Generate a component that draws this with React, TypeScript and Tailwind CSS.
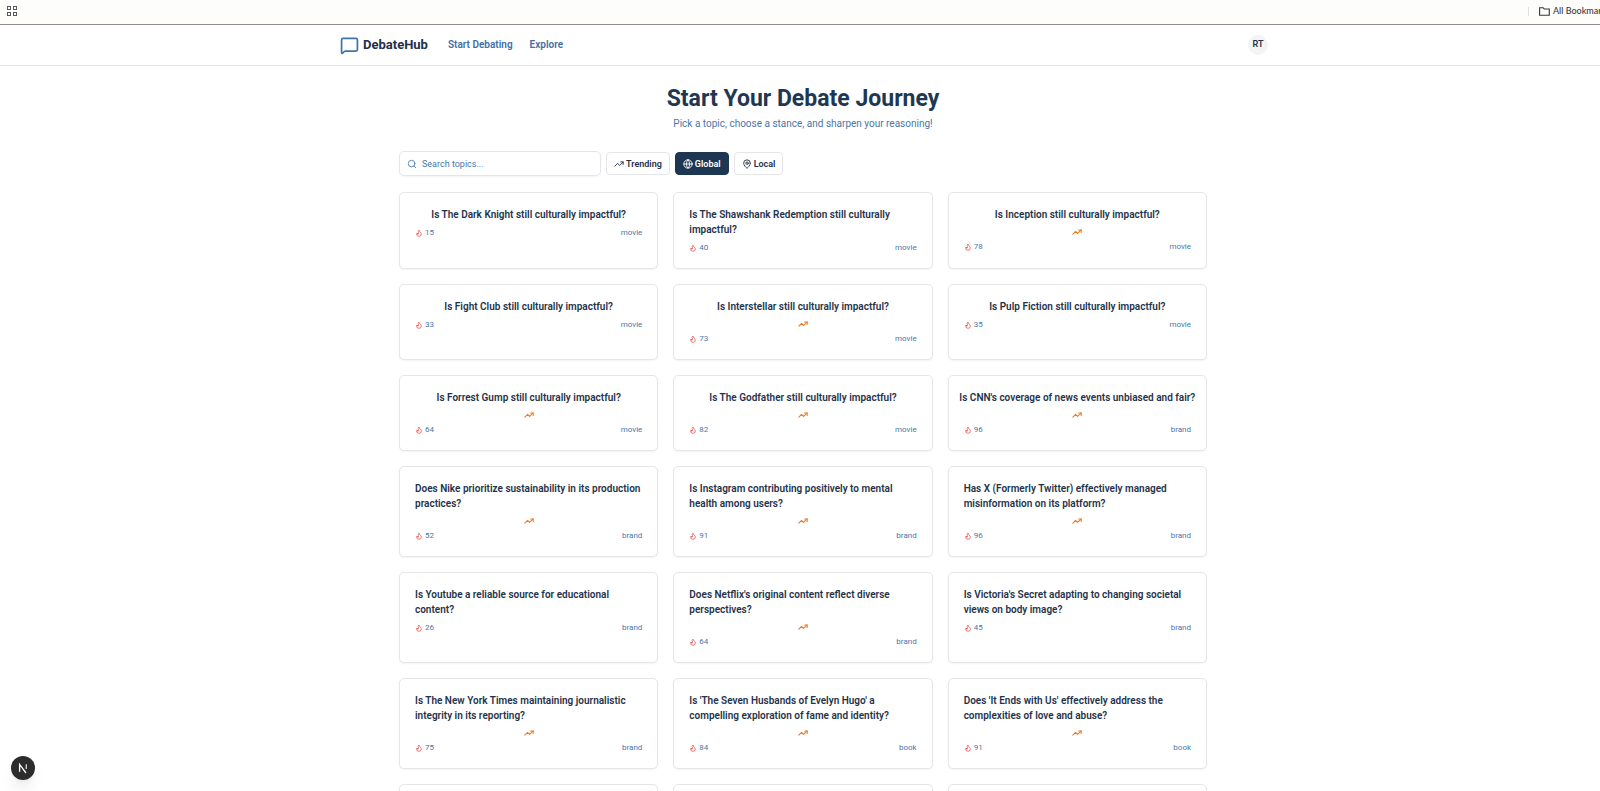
import React, { useState } from "react";
import { Globe, MapPin, MessageSquare, Search, TrendingUp } from "lucide-react";

type Topic = { title: string; heat: number; kind: string; trending?: boolean };

const topics: Topic[] = [
  { title: "Is The Dark Knight still culturally impactful?", heat: 15, kind: "movie" },
  { title: "Is The Shawshank Redemption still culturally\nimpactful?", heat: 40, kind: "movie" },
  { title: "Is Inception still culturally impactful?", heat: 78, kind: "movie", trending: true },
  { title: "Is Fight Club still culturally impactful?", heat: 33, kind: "movie" },
  { title: "Is Interstellar still culturally impactful?", heat: 73, kind: "movie", trending: true },
  { title: "Is Pulp Fiction still culturally impactful?", heat: 35, kind: "movie" },
  { title: "Is Forrest Gump still culturally impactful?", heat: 64, kind: "movie", trending: true },
  { title: "Is The Godfather still culturally impactful?", heat: 82, kind: "movie", trending: true },
  { title: "Is CNN's coverage of news events unbiased and fair?", heat: 96, kind: "brand", trending: true },
  { title: "Does Nike prioritize sustainability in its production\npractices?", heat: 52, kind: "brand", trending: true },
  { title: "Is Instagram contributing positively to mental\nhealth among users?", heat: 91, kind: "brand", trending: true },
  { title: "Has X (Formerly Twitter) effectively managed\nmisinformation on its platform?", heat: 96, kind: "brand", trending: true },
  { title: "Is Youtube a reliable source for educational\ncontent?", heat: 26, kind: "brand" },
  { title: "Does Netflix's original content reflect diverse\nperspectives?", heat: 64, kind: "brand", trending: true },
  { title: "Is Victoria's Secret adapting to changing societal\nviews on body image?", heat: 45, kind: "brand" },
  { title: "Is The New York Times maintaining journalistic\nintegrity in its reporting?", heat: 75, kind: "brand", trending: true },
  { title: "Is 'The Seven Husbands of Evelyn Hugo' a\ncompelling exploration of fame and identity?", heat: 84, kind: "book", trending: true },
  { title: "Does 'It Ends with Us' effectively address the\ncomplexities of love and abuse?", heat: 91, kind: "book", trending: true },
];

const filters = [
  { name: "Trending", Icon: TrendingUp },
  { name: "Global", Icon: Globe },
  { name: "Local", Icon: MapPin },
];

function BookmarksBar() {
  return (
    <div className="flex h-[25px] items-center border-b border-[#918c89] bg-[#fdfdfb] pb-0.5">
      <button aria-label="Apps" className="ml-[7px] text-[#55585d]">
        <svg viewBox="0 0 10 10" className="size-[10px]" fill="none" stroke="currentColor">
          <rect x="0.5" y="0.5" width="3" height="3" />
          <rect x="6.5" y="0.5" width="3" height="3" />
          <rect x="0.5" y="6.5" width="3" height="3" />
          <rect x="6.5" y="6.5" width="3" height="3" />
        </svg>
      </button>
      <div className="flex-1" />
      <div className="flex w-[72px] shrink-0 items-center overflow-hidden">
        <div className="h-[9px] w-px shrink-0 bg-[#dedfdf]" />
        <button className="ml-[10px] flex shrink-0 items-center gap-[3px] whitespace-nowrap font-['Lato',sans-serif] text-[9px] leading-3 font-medium text-[#38393b]">
          <svg viewBox="0 0 11 9" className="h-[9px] w-[11px]" fill="none" stroke="currentColor" strokeWidth="1.1">
            <path d="M0.6 8.2V0.8H4.2L5.3 2H10.3V8.2Z" />
          </svg>
          All Bookmarks
        </button>
      </div>
    </div>
  );
}

function SiteHeader() {
  return (
    <header className="border-b border-[#e6e7e9] pl-2">
      <div className="mx-auto flex h-10 max-w-[928px] items-center">
        <a href="#" className="flex items-center gap-1 text-[13px] leading-4 font-bold text-[#1e3148]">
          <MessageSquare className="size-[19px] text-[#3f75a8]" strokeWidth={2.2} />
          DebateHub
        </a>
        <nav className="ml-5 flex gap-[17px] text-[10px] leading-4 font-semibold text-[#436fa6]">
          <a href="#debate">Start Debating</a>
          <a href="#explore">Explore</a>
        </nav>
        <button className="ml-auto size-5 rounded-full bg-[#f3f4f6] text-[9px] font-semibold text-[#1e3148]">RT</button>
      </div>
    </header>
  );
}

function FlameIcon() {
  return (
    <svg
      viewBox="0 0 24 24"
      className="size-2 text-[#ef4444]"
      fill="none"
      stroke="currentColor"
      strokeWidth="2.2"
      strokeLinecap="round"
      strokeLinejoin="round"
    >
      <path d="M8.5 14.5A2.5 2.5 0 0 0 11 12c0-1.38-.5-2-1-3-1.072-2.143-.224-4.054 2-6 .5 2.5 2 4.9 4 6.5 2 1.6 3 3.5 3 5.5a7 7 0 1 1-14 0c0-1.153.433-2.294 1-3a2.5 2.5 0 0 0 2.5 2.5z" />
    </svg>
  );
}

function TopicCard({ title, heat, kind, trending }: Topic) {
  return (
    <article className="flex flex-col items-center rounded-[5px] border border-[#e4e6ea] bg-white px-[15px] py-[14px] shadow-xs">
      <h3
        className={`mb-[5px] text-[10px] leading-[15px] font-semibold whitespace-pre text-[#1f334b] ${
          title.includes("\n") ? "w-full" : ""
        }`}
      >
        {title}
      </h3>
      {trending && <TrendingUp className="mb-1 h-[10px] w-3 text-[#ee7c26]" strokeWidth={2.6} />}
      <div className="flex w-full items-center justify-between text-[8px] leading-3 text-[#4a76aa]">
        <span className="flex items-center gap-0.5">
          <FlameIcon />
          {heat}
        </span>
        <span>{kind}</span>
      </div>
    </article>
  );
}

function PlaceholderCard() {
  return <div aria-hidden="true" className="h-[76px] rounded-[5px] border border-[#e4e6ea] bg-white shadow-xs" />;
}

export default function App() {
  const [active, setActive] = useState("Global");
  const [query, setQuery] = useState("");
  return (
    <div className="h-screen overflow-hidden bg-white font-['Roboto',sans-serif]">
      <BookmarksBar />
      <SiteHeader />
      <main className="pl-1.5">
        <div className="mx-auto max-w-[808px]">
          <div className="pt-[19px] text-center">
            <h1 className="text-[23px] leading-7 font-bold text-[#1f3852]">Start Your Debate Journey</h1>
            <p className="mt-[3px] text-[10px] leading-4 text-[#4a76aa]">
              Pick a topic, choose a stance, and sharpen your reasoning!
            </p>
          </div>
          <div className="mt-[19px] flex items-center gap-[5px]">
            <label className="flex h-[25px] w-[202px] items-center gap-[5px] rounded-[5px] border border-[#e4e6ea] px-[7px] shadow-xs">
              <Search className="size-[10px] shrink-0 text-[#4a76aa]" />
              <input
                value={query}
                onChange={(e) => setQuery(e.target.value)}
                aria-label="Search topics"
                placeholder="Search topics..."
                className="w-full min-w-0 text-[9px] leading-3 outline-none placeholder:text-[#4a76aa]"
              />
            </label>
            {filters.map(({ name, Icon }) => (
              <button
                key={name}
                onClick={() => setActive(name)}
                aria-pressed={active === name}
                className={`flex h-[23px] items-center gap-0.5 rounded-[4px] border px-[7px] text-[9px] leading-3 font-semibold ${
                  active === name
                    ? "border-[#1d3651] bg-[#1d3651] text-white"
                    : "border-[#e4e6ea] bg-white text-[#1e3148]"
                }`}
              >
                <Icon className="size-[10px]" strokeWidth={2.2} />
                {name}
              </button>
            ))}
          </div>
          <div className="mt-4 grid grid-cols-3 gap-[15px]">
            {topics.map((topic) => (
              <TopicCard key={topic.title} {...topic} />
            ))}
            <PlaceholderCard />
            <PlaceholderCard />
            <PlaceholderCard />
          </div>
        </div>
      </main>
      <button
        aria-label="Open developer tools"
        className="fixed bottom-[11px] left-[11px] flex size-6 items-center justify-center rounded-full bg-[#2c2c2c] shadow-lg"
      >
        <svg viewBox="0 0 24 24" className="size-6" fill="none" stroke="#ffffff" strokeWidth="1.3">
          <path d="M8.6 15.8V8.4L15 17" />
          <path d="M15.3 8.2V13" strokeOpacity="0.8" />
        </svg>
      </button>
    </div>
  );
}
